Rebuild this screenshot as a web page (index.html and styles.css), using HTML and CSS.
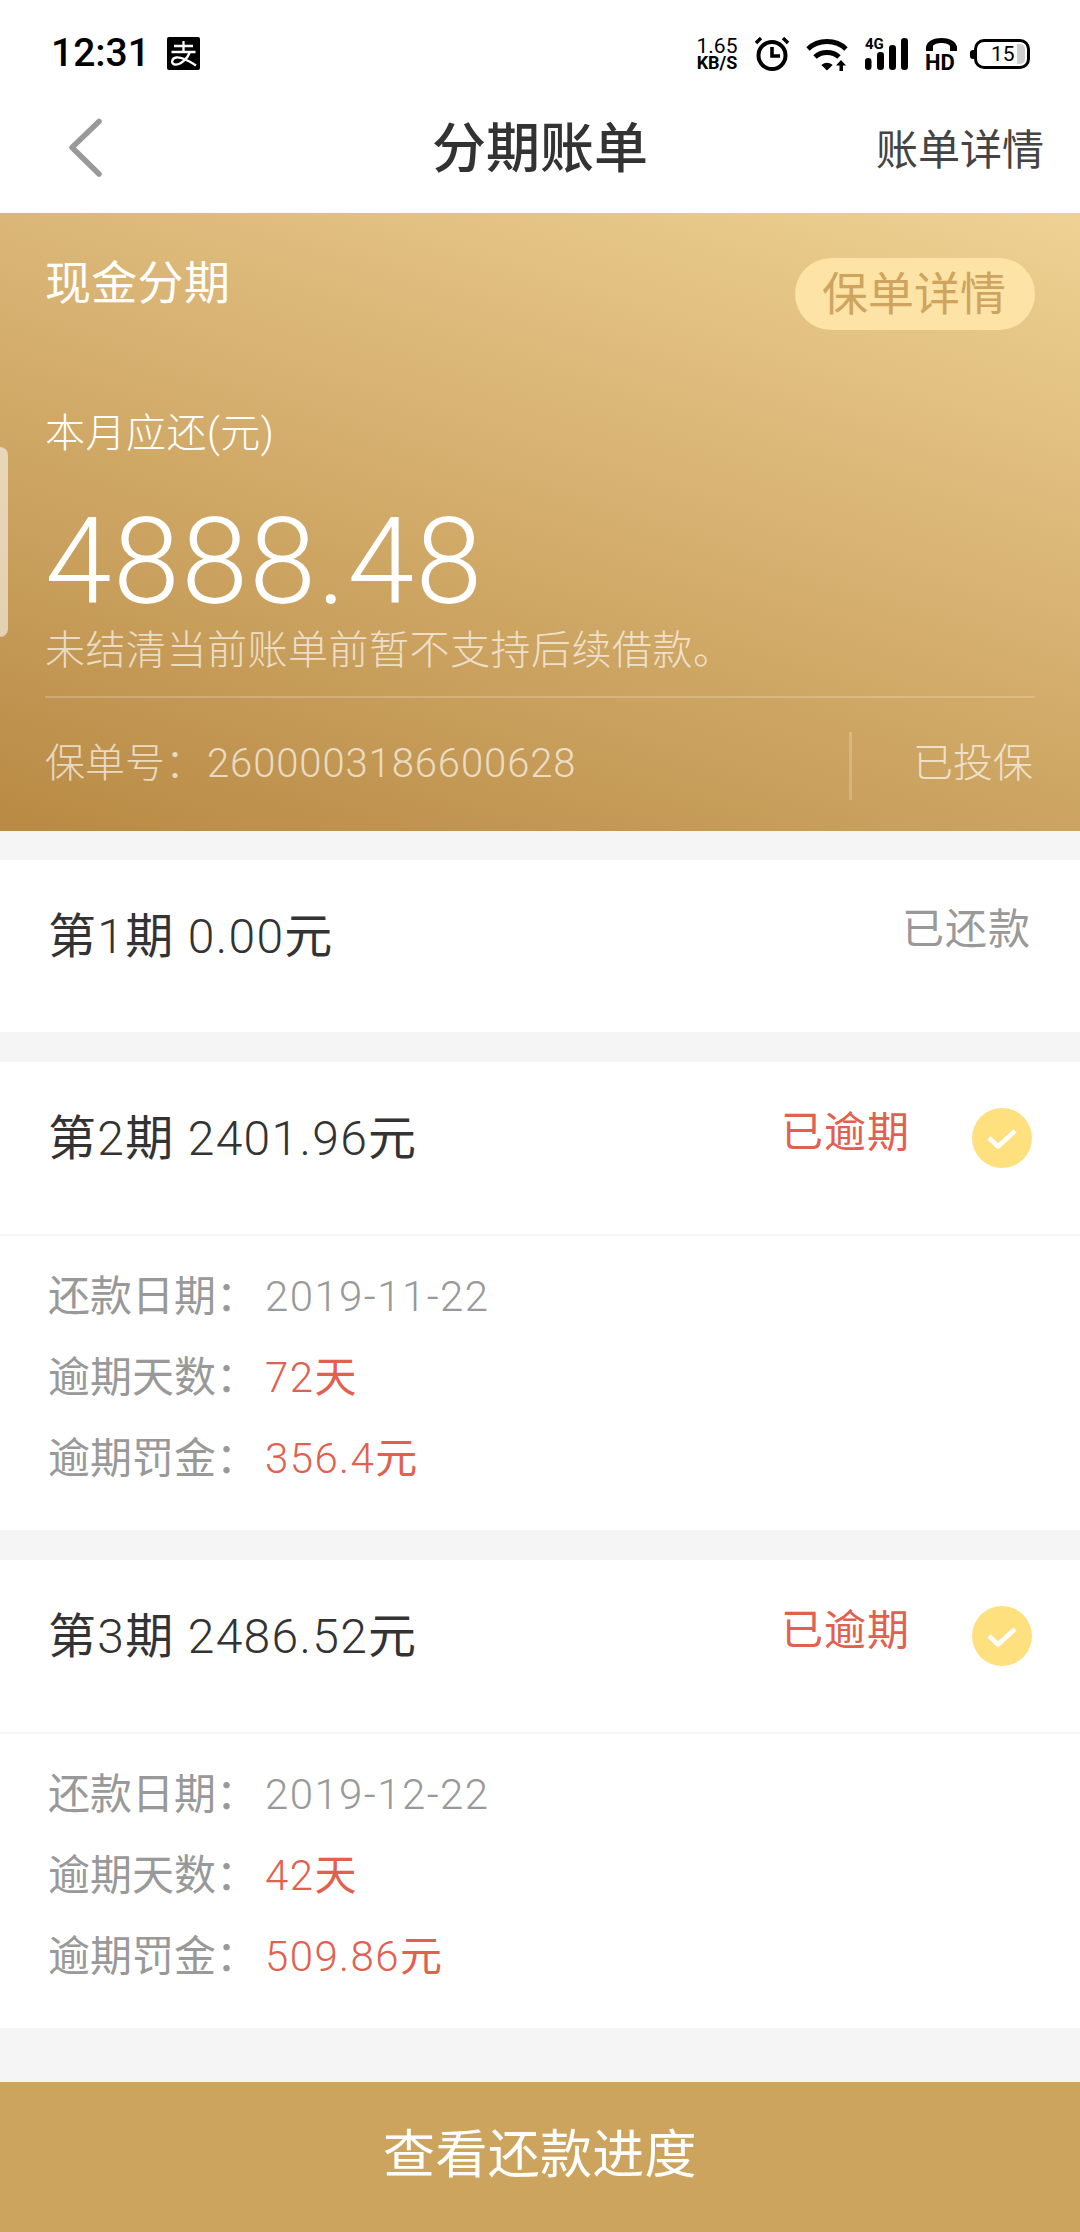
FILE: index.html
```html
<!DOCTYPE html>
<html lang="zh-CN">
<head>
<meta charset="utf-8">
<title>分期账单</title>
<link rel="stylesheet" href="styles.css">
</head>
<body>
<div class="page">
  <header class="status-bar">
    <div class="status-left">
      <span class="clock">12:31</span>
      <svg class="i-alipay" viewBox="0 0 33 33"><rect width="33" height="33" rx="2" fill="#000"/><path d="M7 9H26M16.500 4V15M4.500 15H28.500M23 15C20.500 22 13 28 8 27.500C3.500 27 4.500 21 9.500 20.500C15 20 22 24 29 28.500" fill="none" stroke="#fff" stroke-width="2.300"/></svg>
    </div>
    <div class="status-right">
      <div class="speed"><span class="speed-num">1.65</span><span class="speed-unit">KB/S</span></div>
      <svg class="i-alarm" viewBox="0 0 34 34"><circle cx="17" cy="18.500" r="13.500" fill="none" stroke="#000" stroke-width="4"/><path d="M17 10V19H25" fill="none" stroke="#000" stroke-width="3.600"/><path d="M1 6L6 1M33 6L28 1" stroke="#000" stroke-width="3.400"/></svg>
      <svg class="i-wifi" viewBox="0 0 42 34"><path d="M2 12C12 2 30 2 40 12M9 20C15 14 27 14 33 20" fill="none" stroke="#000" stroke-width="4.800"/><path d="M16.500 28C19 26 23 26 25.500 28L21 32.500Z" fill="#000" stroke="#000" stroke-width="1.500"/><path d="M35 23L40 28.500H37V34H33.500V28.500H30Z" fill="#000"/></svg>
      <svg class="i-signal" viewBox="0 0 43 34"><text x="0" y="12" class="svg-4g">4G</text><rect x="0" y="21" width="6.500" height="12" rx="3.200"/><rect x="12" y="15" width="7" height="18" rx="3.200"/><rect x="24" y="8" width="7" height="25" rx="3.200"/><rect x="36" y="1" width="7" height="32" rx="3.200"/></svg>
      <svg class="i-hd" viewBox="0 0 33 33"><path d="M1 14V10C2 4 9 1 16.500 1S31 4 32 10V14H25V9C24 7 20 6 16.500 6S9 7 8 9V14Z" fill="#000"/><text x="0" y="32.500" class="svg-hd">HD</text></svg>
      <div class="battery"><span class="battery-tip"></span><div class="battery-body"><span class="battery-num">15</span><span class="battery-fill"></span></div></div>
    </div>
  </header>

  <nav class="nav">
    <svg class="i-back" viewBox="0 0 36 60"><path d="M31 3.500L4 29.500L31 56" fill="none" stroke="#999" stroke-width="5.500" stroke-linecap="round" stroke-linejoin="round"/></svg>
    <h1 class="nav-title">分期账单</h1>
    <span class="nav-link">账单详情</span>
  </nav>

  <section class="hero">
    <span class="side-handle"></span>
    <div class="hero-top">
      <span class="hero-type">现金分期</span>
      <span class="pill">保单详情</span>
    </div>
    <div class="hero-label">本月应还(元)</div>
    <div class="hero-amount">4888.48</div>
    <div class="hero-note">未结清当前账单前暂不支持后续借款。</div>
    <div class="hero-foot">
      <span class="policy"><span>保单号：</span><span class="policy-num">2600003186600628</span></span>
      <span class="foot-div"></span>
      <span class="policy-state">已投保</span>
    </div>
  </section>

  <main class="list">
    <article class="card">
      <div class="card-head">
        <span class="term">第<span class="num">1</span>期 <span class="num">0.00</span>元</span>
        <span class="state state-paid">已还款</span>
      </div>
    </article>

    <article class="card">
      <div class="card-head">
        <span class="term">第<span class="num">2</span>期 <span class="num">2401.96</span>元</span>
        <span class="state state-late">已逾期</span>
        <svg class="i-check" viewBox="0 0 60 60"><circle cx="30" cy="30" r="30" fill="#ffe07f"/><path d="M17 30L26 38.500L43 23" fill="none" stroke="#fff" stroke-width="4.500" stroke-linejoin="round"/></svg>
      </div>
      <div class="card-body">
        <div class="row"><span class="row-label">还款日期：</span><span class="row-val"><span class="num">2019-11-22</span></span></div>
        <div class="row"><span class="row-label">逾期天数：</span><span class="row-val row-red"><span class="num">72</span>天</span></div>
        <div class="row"><span class="row-label">逾期罚金：</span><span class="row-val row-red"><span class="num">356.4</span>元</span></div>
      </div>
    </article>

    <article class="card">
      <div class="card-head">
        <span class="term">第<span class="num">3</span>期 <span class="num">2486.52</span>元</span>
        <span class="state state-late">已逾期</span>
        <svg class="i-check" viewBox="0 0 60 60"><circle cx="30" cy="30" r="30" fill="#ffe07f"/><path d="M17 30L26 38.500L43 23" fill="none" stroke="#fff" stroke-width="4.500" stroke-linejoin="round"/></svg>
      </div>
      <div class="card-body">
        <div class="row"><span class="row-label">还款日期：</span><span class="row-val"><span class="num">2019-12-22</span></span></div>
        <div class="row"><span class="row-label">逾期天数：</span><span class="row-val row-red"><span class="num">42</span>天</span></div>
        <div class="row"><span class="row-label">逾期罚金：</span><span class="row-val row-red"><span class="num">509.86</span>元</span></div>
      </div>
    </article>
  </main>

  <button class="cta">查看还款进度</button>
</div>
</body>
</html>
```

FILE: styles.css
```css
* { box-sizing: border-box; margin: 0; padding: 0; }
html, body { width: 1080px; height: 2232px; overflow: hidden; }
body {
  background: #f5f5f5;
  font-family: Roboto, "Noto Sans CJK SC", sans-serif;
  font-weight: 400;
  color: #333;
}
.page { width: 1080px; height: 2232px; display: flex; flex-direction: column; }
.num { font-weight: 300; }

/* status bar */
.status-bar {
  height: 76px;
  background: #fff;
  display: flex;
  align-items: flex-start;
  justify-content: space-between;
  padding: 37px 50px 0 51px;
}
.status-left { display: flex; align-items: center; gap: 17px; }
.clock { font-size: 39px; line-height: 33px; font-weight: 500; color: #000; }
.i-alipay { width: 33px; height: 33px; display: block; }
.status-right { display: flex; align-items: flex-start; gap: 17px; }
.speed { width: 42px; display: flex; flex-direction: column; align-items: center; color: #000; }
.speed-num { font-size: 21px; line-height: 19px; }
.speed-unit { font-size: 18px; line-height: 14px; font-weight: 700; white-space: nowrap; }
.i-alarm { width: 34px; height: 34px; display: block; }
.i-wifi { width: 42px; height: 34px; display: block; }
.i-signal { width: 43px; height: 34px; display: block; fill: #000; overflow: visible; }
.svg-4g { font-family: Roboto, sans-serif; font-size: 15px; font-weight: 700; }
.i-hd { width: 33px; height: 33px; display: block; overflow: visible; }
.svg-hd { font-family: Roboto, sans-serif; font-size: 22px; font-weight: 700; }
.battery { width: 60px; height: 30px; margin: 2px 0 0 -5px; display: flex; align-items: center; }
.battery-tip { width: 4px; height: 9px; background: #000; border-radius: 3px 0 0 3px; }
.battery-body {
  flex: 1;
  height: 30px;
  border: 3px solid #000;
  border-radius: 10px;
  display: flex;
  align-items: center;
  justify-content: space-between;
  padding: 2px 2px 2px 14px;
}
.battery-num { font-size: 21px; line-height: 20px; color: #000; }
.battery-fill { width: 8px; height: 20px; background: #cfcfcf; border-radius: 0 5px 5px 0; }

/* nav */
.nav {
  height: 137px;
  background: #fff;
  display: flex;
  align-items: center;
  justify-content: space-between;
  padding: 0 36px 0 68px;
  position: relative;
}
.i-back { width: 36px; height: 60px; display: block; margin-top: 7px; }
.nav-title {
  position: absolute;
  left: 0; right: 0; top: 44px;
  text-align: center;
  font-size: 54px;
  line-height: 60px;
  font-weight: 500;
  color: #333;
}
.nav-link { font-size: 42px; line-height: 60px; color: #444; margin-top: 13px; }

/* hero */
.hero {
  position: relative;
  height: 618px;
  padding: 39px 45px 0 45px;
  background: linear-gradient(198deg, #eed294 0%, #d9b474 40%, #b88a44 100%);
  color: #fff;
  font-weight: 300;
}
.side-handle {
  position: absolute;
  left: 0; top: 234px;
  width: 8px; height: 190px;
  background: rgba(255,255,255,.55);
  border-radius: 0 8px 8px 0;
}
.hero-top { display: flex; justify-content: space-between; align-items: flex-start; }
.hero-type { font-size: 46px; line-height: 60px; margin-top: 1px; letter-spacing: .3px; font-weight: 400; }
.pill {
  margin-top: 6px;
  width: 240px; height: 72px;
  border-radius: 36px;
  background: #fde3a6;
  color: #cfa45f;
  font-size: 46px;
  font-weight: 400;
  line-height: 72px;
  text-align: center;
  padding-right: 2px;
}
.hero-label { margin-top: 74px; font-size: 40px; line-height: 60px; letter-spacing: .5px; }
.hero-amount { margin-top: 38px; font-size: 120px; line-height: 120px; letter-spacing: 1.500px; }
.hero-note { margin-top: -1px; font-size: 40px; line-height: 60px; color: rgba(255,255,255,.68); letter-spacing: .5px; }
.hero-foot {
  margin-top: 15px;
  border-top: 2px solid rgba(255,255,255,.2);
  padding-top: 34px;
  height: 135px;
  display: flex;
  align-items: flex-start;
  color: rgba(255,255,255,.68);
  font-size: 40px;
}
.policy { flex: 1; line-height: 60px; margin-top: 2px; display: flex; }
.policy-num { letter-spacing: .9px; margin-left: 2px; }
.foot-div { width: 3px; height: 68px; background: rgba(255,255,255,.2); }
.policy-state { width: 183px; text-align: right; line-height: 60px; margin-top: 2px; padding-right: 2px; }

/* list */
.list { flex: 1; padding-top: 29px; display: flex; flex-direction: column; gap: 30px; }
.card { background: #fff; }
.card-head {
  height: 172px;
  display: flex;
  align-items: flex-start;
  padding: 47px 48px 0 48px;
}
.card-body {
  border-top: 2px solid #f5f5f5;
  padding: 20px 0 31px 48px;
}
.term { flex: 1; font-size: 48px; line-height: 60px; letter-spacing: 1.300px; color: #333; }
.state { font-size: 42px; line-height: 60px; letter-spacing: 1px; }
.state-paid { color: #999; margin: -7px 1px 0 0; }
.state-late { color: #e2604f; margin: -6px 62px 0 0; }
.i-check { width: 60px; height: 60px; display: block; margin-top: -1px; }
.row { height: 81px; line-height: 81px; font-size: 42px; display: flex; color: #999; }
.row-val { margin-left: 7px; letter-spacing: 1.400px; }
.row-red { color: #e2604f; }

/* bottom button */
.cta {
  height: 150px;
  width: 100%;
  border: 0;
  background: #cca45e;
  color: #fff;
  font-family: inherit;
  font-size: 52px;
  letter-spacing: .3px;
  padding-bottom: 14px;
}
```
